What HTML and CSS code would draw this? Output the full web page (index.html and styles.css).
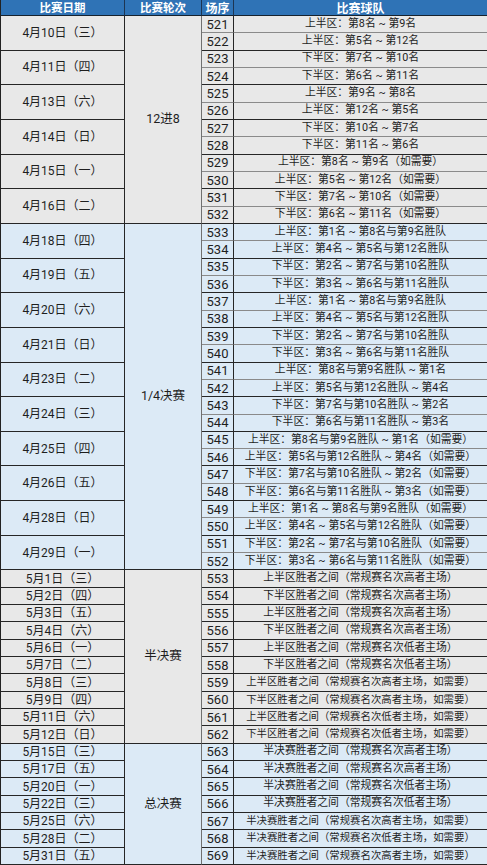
FILE: index.html
```html
<!DOCTYPE html>
<html lang="zh-CN">
<head>
<meta charset="utf-8">
<title>季后赛赛程</title>
<link rel="stylesheet" href="styles.css">
</head>
<body>
<div class="sheet">
  <div class="h h1">比赛日期</div>
  <div class="h h2">比赛轮次</div>
  <div class="h h3">场序</div>
  <div class="h h4">比赛球队</div>

  <div class="date">4月10日（三）</div>
  <div class="round r12">12进8</div>
  <div class="num">521</div><div class="team">上半区：第8名 ~ 第9名</div>
  <div class="num end">522</div><div class="team end">上半区：第5名 ~ 第12名</div>
  <div class="date">4月11日（四）</div>
  <div class="num">523</div><div class="team">下半区：第7名 ~ 第10名</div>
  <div class="num end">524</div><div class="team end">下半区：第6名 ~ 第11名</div>
  <div class="date">4月13日（六）</div>
  <div class="num">525</div><div class="team">上半区：第9名 ~ 第8名</div>
  <div class="num end">526</div><div class="team end">上半区：第12名 ~ 第5名</div>
  <div class="date">4月14日（日）</div>
  <div class="num">527</div><div class="team">下半区：第10名 ~ 第7名</div>
  <div class="num end">528</div><div class="team end">下半区：第11名 ~ 第6名</div>
  <div class="date">4月15日（一）</div>
  <div class="num">529</div><div class="team">上半区：第8名 ~ 第9名（如需要）</div>
  <div class="num end">530</div><div class="team end">上半区：第5名 ~ 第12名（如需要）</div>
  <div class="date">4月16日（二）</div>
  <div class="num">531</div><div class="team">下半区：第7名 ~ 第10名（如需要）</div>
  <div class="num end">532</div><div class="team end">下半区：第6名 ~ 第11名（如需要）</div>

  <div class="date blue">4月18日（四）</div>
  <div class="round r20 blue">1/4决赛</div>
  <div class="num blue">533</div><div class="team blue">上半区：第1名 ~ 第8名与第9名胜队</div>
  <div class="num end blue">534</div><div class="team end blue">上半区：第4名 ~ 第5名与第12名胜队</div>
  <div class="date blue">4月19日（五）</div>
  <div class="num blue">535</div><div class="team blue">下半区：第2名 ~ 第7名与第10名胜队</div>
  <div class="num end blue">536</div><div class="team end blue">下半区：第3名 ~ 第6名与第11名胜队</div>
  <div class="date blue">4月20日（六）</div>
  <div class="num blue">537</div><div class="team blue">上半区：第1名 ~ 第8名与第9名胜队</div>
  <div class="num end blue">538</div><div class="team end blue">上半区：第4名 ~ 第5名与第12名胜队</div>
  <div class="date blue">4月21日（日）</div>
  <div class="num blue">539</div><div class="team blue">下半区：第2名 ~ 第7名与第10名胜队</div>
  <div class="num end blue">540</div><div class="team end blue">下半区：第3名 ~ 第6名与第11名胜队</div>
  <div class="date blue">4月23日（二）</div>
  <div class="num blue">541</div><div class="team blue">上半区：第8名与第9名胜队 ~ 第1名</div>
  <div class="num end blue">542</div><div class="team end blue">上半区：第5名与第12名胜队 ~ 第4名</div>
  <div class="date blue">4月24日（三）</div>
  <div class="num blue">543</div><div class="team blue">下半区：第7名与第10名胜队 ~ 第2名</div>
  <div class="num end blue">544</div><div class="team end blue">下半区：第6名与第11名胜队 ~ 第3名</div>
  <div class="date blue">4月25日（四）</div>
  <div class="num blue">545</div><div class="team blue">上半区：第8名与第9名胜队 ~ 第1名（如需要）</div>
  <div class="num end blue">546</div><div class="team end blue">上半区：第5名与第12名胜队 ~ 第4名（如需要）</div>
  <div class="date blue">4月26日（五）</div>
  <div class="num blue">547</div><div class="team blue">下半区：第7名与第10名胜队 ~ 第2名（如需要）</div>
  <div class="num end blue">548</div><div class="team end blue">下半区：第6名与第11名胜队 ~ 第3名（如需要）</div>
  <div class="date blue">4月28日（日）</div>
  <div class="num blue">549</div><div class="team blue">上半区：第1名 ~ 第8名与第9名胜队（如需要）</div>
  <div class="num end blue">550</div><div class="team end blue">上半区：第4名 ~ 第5名与第12名胜队（如需要）</div>
  <div class="date blue">4月29日（一）</div>
  <div class="num blue">551</div><div class="team blue">下半区：第2名 ~ 第7名与第10名胜队（如需要）</div>
  <div class="num end blue">552</div><div class="team end blue">下半区：第3名 ~ 第6名与第11名胜队（如需要）</div>

  <div class="date one">5月1日（三）</div>
  <div class="round r10">半决赛</div>
  <div class="num end">553</div><div class="team end">上半区胜者之间（常规赛名次高者主场）</div>
  <div class="date one">5月2日（四）</div>
  <div class="num end">554</div><div class="team end">下半区胜者之间（常规赛名次高者主场）</div>
  <div class="date one">5月3日（五）</div>
  <div class="num end">555</div><div class="team end">上半区胜者之间（常规赛名次高者主场）</div>
  <div class="date one">5月4日（六）</div>
  <div class="num end">556</div><div class="team end">下半区胜者之间（常规赛名次高者主场）</div>
  <div class="date one">5月6日（一）</div>
  <div class="num end">557</div><div class="team end">上半区胜者之间（常规赛名次低者主场）</div>
  <div class="date one">5月7日（二）</div>
  <div class="num end">558</div><div class="team end">下半区胜者之间（常规赛名次低者主场）</div>
  <div class="date one">5月8日（三）</div>
  <div class="num end">559</div><div class="team end tight">上半区胜者之间（常规赛名次高者主场，如需要）</div>
  <div class="date one">5月9日（四）</div>
  <div class="num end">560</div><div class="team end tight">下半区胜者之间（常规赛名次高者主场，如需要）</div>
  <div class="date one">5月11日（六）</div>
  <div class="num end">561</div><div class="team end tight">上半区胜者之间（常规赛名次低者主场，如需要）</div>
  <div class="date one">5月12日（日）</div>
  <div class="num end">562</div><div class="team end tight">下半区胜者之间（常规赛名次低者主场，如需要）</div>

  <div class="date one blue">5月15日（三）</div>
  <div class="round r7 blue">总决赛</div>
  <div class="num end blue">563</div><div class="team end blue">半决赛胜者之间（常规赛名次高者主场）</div>
  <div class="date one blue">5月17日（五）</div>
  <div class="num end blue">564</div><div class="team end blue">半决赛胜者之间（常规赛名次高者主场）</div>
  <div class="date one blue">5月20日（一）</div>
  <div class="num end blue">565</div><div class="team end blue">半决赛胜者之间（常规赛名次低者主场）</div>
  <div class="date one blue">5月22日（三）</div>
  <div class="num end blue">566</div><div class="team end blue">半决赛胜者之间（常规赛名次低者主场）</div>
  <div class="date one blue">5月25日（六）</div>
  <div class="num end blue">567</div><div class="team end blue tight">半决赛胜者之间（常规赛名次高者主场，如需要）</div>
  <div class="date one blue">5月28日（二）</div>
  <div class="num end blue">568</div><div class="team end blue tight">半决赛胜者之间（常规赛名次低者主场，如需要）</div>
  <div class="date one blue">5月31日（五）</div>
  <div class="num end blue">569</div><div class="team end blue tight">半决赛胜者之间（常规赛名次高者主场，如需要）</div>
</div>
</body>
</html>
```

FILE: styles.css
```css
* {
  box-sizing: border-box;
  margin: 0;
  padding: 0;
}

body {
  margin: 0;
  background: #ffffff;
  font-family: Roboto, "Noto Sans CJK SC", sans-serif;
  color: #1e1e1e;
}

.sheet {
  display: grid;
  grid-template-columns: 124px 77px 32px 253px;
  grid-template-rows: 16px repeat(49, 1fr);
  width: 487px;
  height: 865px;
  border-left: 1px solid #222222;
}

.sheet > div {
  display: flex;
  align-items: center;
  justify-content: center;
  white-space: nowrap;
  line-height: 1;
  background: #e8e8e8;
}

.sheet > div.blue {
  background: #dceaf6;
}

.sheet > div.h {
  background: #2f73b6;
  color: #ffffff;
  font-weight: 700;
  border-right: 1px solid #1d3552;
  border-bottom: 1px solid #16222e;
  font-size: 11.5px;
  font-family: "Noto Sans CJK SC", sans-serif;
}

.sheet > div.h3 {
  font-size: 12px;
}

.sheet > div.h4 {
  font-size: 12px;
  border-right: none;
}

.date {
  grid-column: 1;
  grid-row: span 2;
  font-size: 12px;
  border-right: 1px solid #262626;
  border-bottom: 1px solid #262626;
}

.date.one {
  grid-row: span 1;
}

.round {
  grid-column: 2;
  font-size: 12.5px;
  border-right: 1px solid #707070;
  border-bottom: 1px solid #262626;
}

.r12 { grid-row: span 12; }
.r20 { grid-row: span 20; }
.r10 { grid-row: span 10; }
.r7 { grid-row: span 7; }

.num {
  grid-column: 3;
  font-size: 13px;
  border-right: 1px solid #262626;
  border-bottom: 1px solid #8a8a8a;
}

.team {
  grid-column: 4;
  font-size: 10.8px;
  border-bottom: 1px solid #8a8a8a;
}

.team.tight {
  font-size: 10.4px;
}

.num.end,
.team.end {
  border-bottom: 1px solid #262626;
}
```
